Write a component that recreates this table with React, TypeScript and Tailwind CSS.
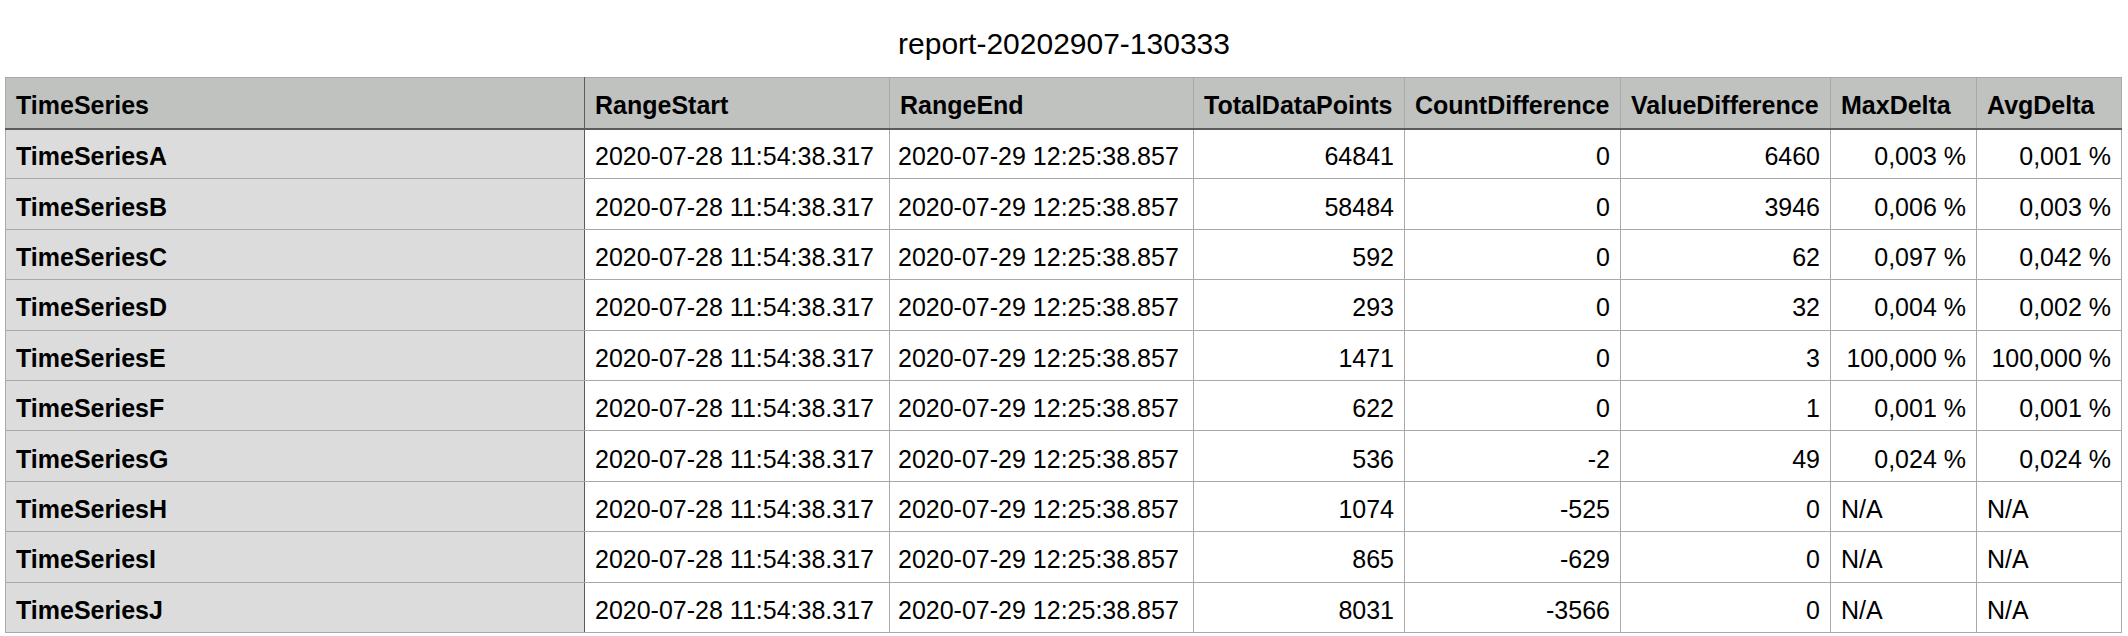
import React from 'react';

const rangeStart = '2020-07-28 11:54:38.317';
const rangeEnd = '2020-07-29 12:25:38.857';

const rows = [
  { name: 'TimeSeriesA', total: '64841', count: '0', value: '6460', max: '0,003 %', avg: '0,001 %' },
  { name: 'TimeSeriesB', total: '58484', count: '0', value: '3946', max: '0,006 %', avg: '0,003 %' },
  { name: 'TimeSeriesC', total: '592', count: '0', value: '62', max: '0,097 %', avg: '0,042 %' },
  { name: 'TimeSeriesD', total: '293', count: '0', value: '32', max: '0,004 %', avg: '0,002 %' },
  { name: 'TimeSeriesE', total: '1471', count: '0', value: '3', max: '100,000 %', avg: '100,000 %' },
  { name: 'TimeSeriesF', total: '622', count: '0', value: '1', max: '0,001 %', avg: '0,001 %' },
  { name: 'TimeSeriesG', total: '536', count: '-2', value: '49', max: '0,024 %', avg: '0,024 %' },
  { name: 'TimeSeriesH', total: '1074', count: '-525', value: '0', max: 'N/A', avg: 'N/A' },
  { name: 'TimeSeriesI', total: '865', count: '-629', value: '0', max: 'N/A', avg: 'N/A' },
  { name: 'TimeSeriesJ', total: '8031', count: '-3566', value: '0', max: 'N/A', avg: 'N/A' },
];

const headers = [
  { label: 'TimeSeries', w: 'w-[579px]' },
  { label: 'RangeStart', w: 'w-[305px]' },
  { label: 'RangeEnd', w: 'w-[304px]' },
  { label: 'TotalDataPoints', w: 'w-[211px]' },
  { label: 'CountDifference', w: 'w-[216px]' },
  { label: 'ValueDifference', w: 'w-[210px]' },
  { label: 'MaxDelta', w: 'w-[146px]' },
  { label: 'AvgDelta', w: 'w-[145px]' },
];

// numbers go right, text (N/A) goes left, like the spreadsheet export
function DeltaCell({ v }: { v: string }) {
  const isNum = v !== 'N/A';
  return (
    <td className={`border border-[#a9a9a9] px-[10px] pt-[5px] ${isNum ? 'text-right' : 'text-left'}`}>{v}</td>
  );
}

export default function App() {
  return (
    <div className="min-h-screen bg-white text-black" style={{ fontFamily: '"Liberation Sans", Arial, sans-serif' }}>
      <h1 className="pt-[27px] pb-[16px] text-center text-[30px] leading-[34px] font-normal">report-20202907-130333</h1>
      <div className="pl-[5px]">
        <table className="w-[2116px] table-fixed border-collapse whitespace-nowrap text-[25px] leading-[28px]">
          <thead>
            <tr className="h-[51px] bg-[#c0c2c0]">
              {headers.map((h, i) => (
                <th
                  key={h.label}
                  className={`${h.w} border border-[#a9a9a9] border-b-2 border-b-[#5c5c5c] px-[10px] pt-[5px] text-left font-bold ${i === 0 ? 'border-r-[#5c5c5c]' : ''}`}
                >
                  {h.label}
                </th>
              ))}
            </tr>
          </thead>
          <tbody>
            {rows.map((r) => (
              <tr key={r.name} className="h-[50.4px]">
                <td className="border border-[#a9a9a9] border-r-[#5c5c5c] bg-[#dcdcdc] px-[10px] pt-[5px] font-bold">{r.name}</td>
                <td className="border border-[#a9a9a9] px-[10px] pt-[5px]">{rangeStart}</td>
                <td className="border border-[#a9a9a9] px-[8px] pt-[5px]">{rangeEnd}</td>
                <td className="border border-[#a9a9a9] px-[10px] pt-[5px] text-right">{r.total}</td>
                <td className="border border-[#a9a9a9] px-[10px] pt-[5px] text-right">{r.count}</td>
                <td className="border border-[#a9a9a9] px-[10px] pt-[5px] text-right">{r.value}</td>
                <DeltaCell v={r.max} />
                <DeltaCell v={r.avg} />
              </tr>
            ))}
          </tbody>
        </table>
      </div>
    </div>
  );
}
